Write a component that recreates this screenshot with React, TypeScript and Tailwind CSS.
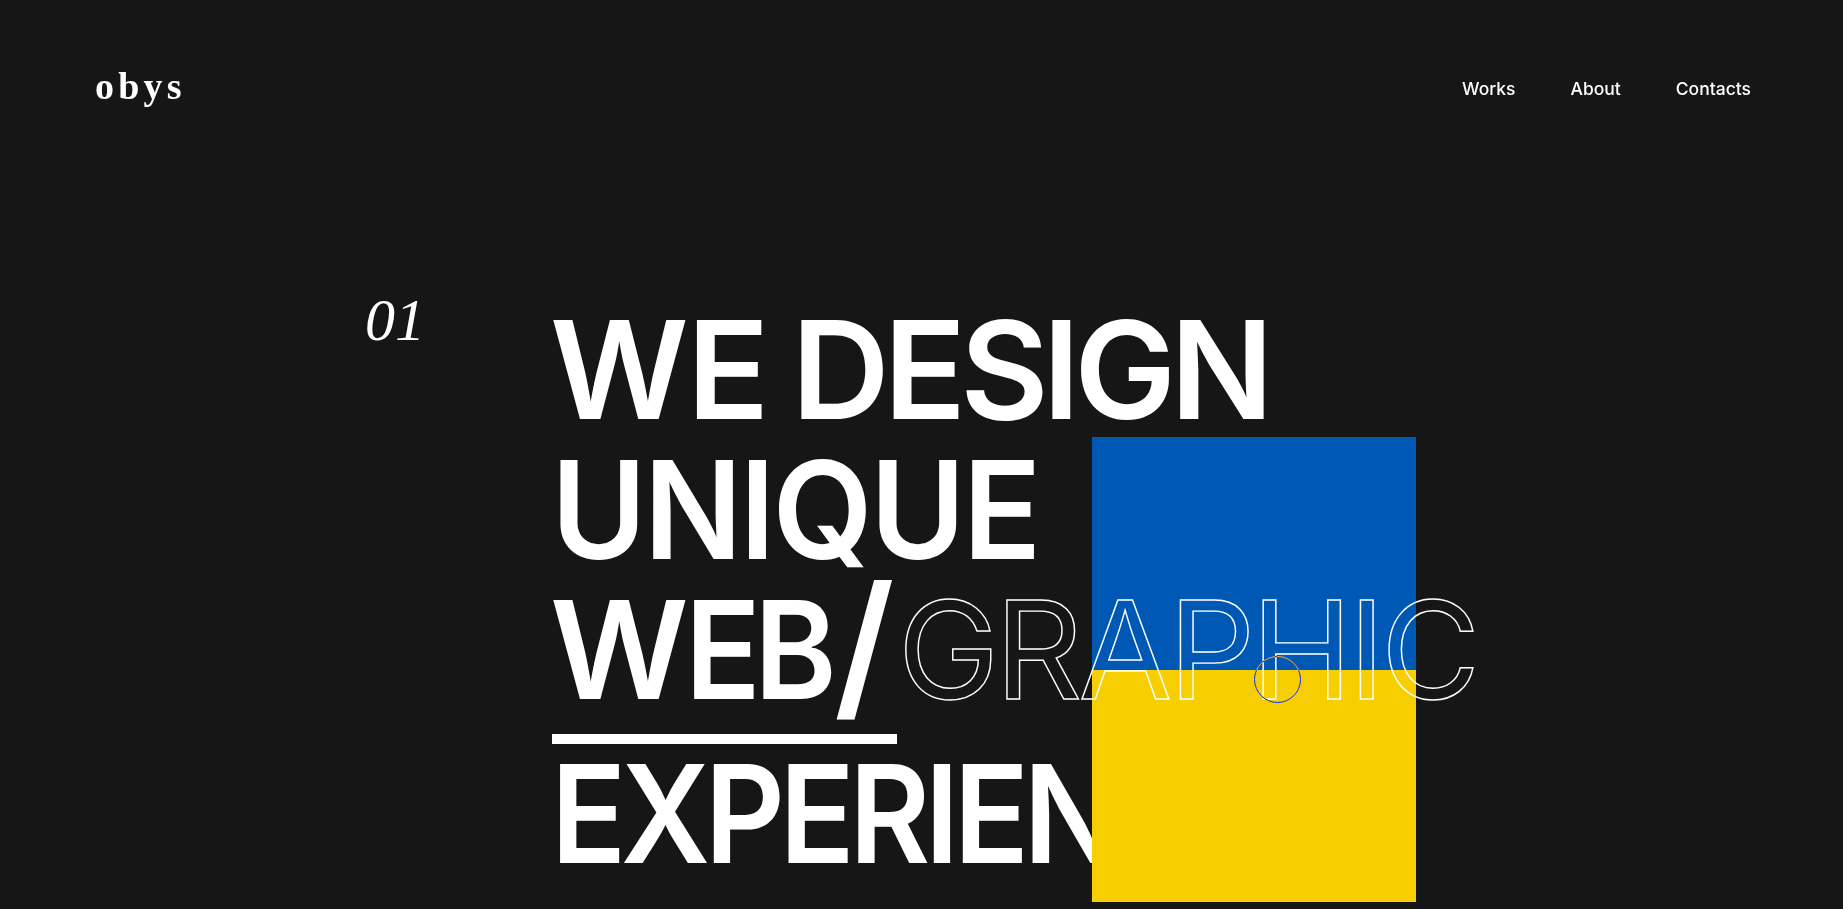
export default function App() {
  return (
    <div className="relative h-[909px] overflow-hidden bg-[#161616] text-white [font-family:Inter,sans-serif]">
      <header className="flex h-[300px] items-start justify-between pl-[95px] pr-[92px] pt-[64px]">
        <a className="[font-family:'Liberation_Serif',serif] text-[38px] leading-[44px] font-bold tracking-[0.11em]">obys</a>
        <nav className="flex gap-[55px] pt-[12px] text-[17.5px] leading-[26px] font-medium">
          <a>Works</a>
          <a>About</a>
          <a>Contacts</a>
        </nav>
      </header>
      <main className="flex pl-[365px]">
        <div className="-mt-[5px] w-[187px] [font-family:'Liberation_Serif',serif] text-[60px] leading-[50px] italic">01</div>
        <h1 className="text-[136px] leading-[140px] font-semibold whitespace-nowrap">
          <div className="-ml-[2px] tracking-[-6px]">
            <span className="inline-block w-[137px]">W</span>E DESIGN
          </div>
          <div className="-ml-[1px] origin-left scale-x-[0.955] tracking-[-3px]">UNIQUE</div>
          <div className="-ml-[2px] flex items-baseline">
            <span className="tracking-[-7px]">
              <span className="inline-block w-[135px]">W</span>
              <span className="inline-block origin-left scale-x-[0.92]">EB</span>
            </span>
            <span className="-ml-[9px] inline-block translate-y-[3px] text-[160px] leading-[0]">/</span>
            <span className="relative z-20 ml-[3px] font-normal tracking-[-4px] text-transparent [-webkit-text-stroke:1.4px_#fff]">GRAPHIC</span>
          </div>
          <div className="mt-[14px] h-[10px] w-[345px] bg-white" />
          <div className="-ml-[1px] origin-left scale-x-[0.914] tracking-[-6px]">EXPERIENCE</div>
        </h1>
      </main>
      <div className="absolute left-[1092px] top-[437px] z-10 flex h-[465px] w-[324px] flex-col">
        <div className="h-[233px] bg-[#0058b5]" />
        <div className="flex-1 bg-[#f7cf00]" />
      </div>
      <div className="absolute left-[1254px] top-[656px] z-30 size-[47px] rounded-full border border-white mix-blend-difference" />
    </div>
  );
}
